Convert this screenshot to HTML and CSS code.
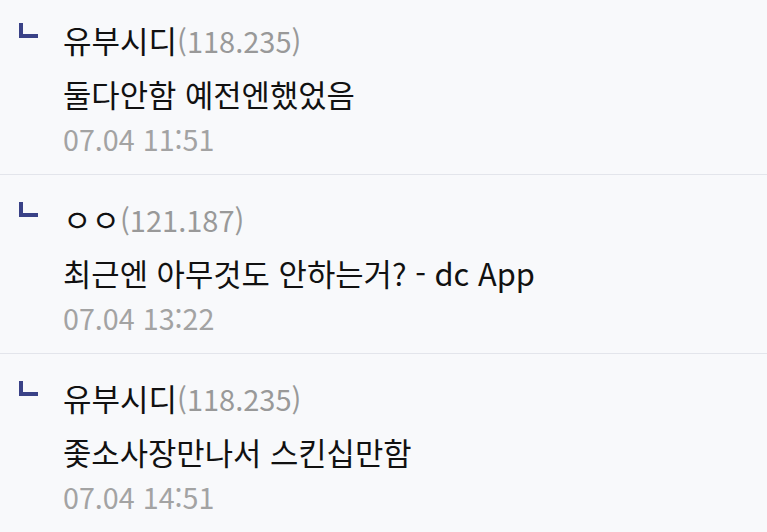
FILE: index.html
```html
<!DOCTYPE html>
<html lang="ko">

<head>
    <meta charset="UTF-8">
    <meta name="viewport" content="width=device-width, initial-scale=1.0">
    <title>답글</title>
    <link rel="stylesheet" href="styles.css">
</head>

<body>
    <ul class="reply-list">
        <li class="reply">
            <span class="reply-mark"></span>
            <div class="reply-body">
                <p class="nick">유부시디<span class="ip">(118.235)</span></p>
                <p class="txt">둘다안함 예전엔했었음</p>
                <p class="date">07.04 11:51</p>
            </div>
        </li>
        <li class="reply">
            <span class="reply-mark"></span>
            <div class="reply-body">
                <p class="nick">ㅇㅇ<span class="ip">(121.187)</span></p>
                <p class="txt">최근엔 아무것도 안하는거? - dc App</p>
                <p class="date">07.04 13:22</p>
            </div>
        </li>
        <li class="reply">
            <span class="reply-mark"></span>
            <div class="reply-body">
                <p class="nick">유부시디<span class="ip">(118.235)</span></p>
                <p class="txt">좇소사장만나서 스킨십만함</p>
                <p class="date">07.04 14:51</p>
            </div>
        </li>
    </ul>
</body>

</html>
```

FILE: styles.css
```css
* {
    padding: 0;
    margin: 0;
    list-style: none;
    border: 0;
}

body {
    background: #f8f9fb;
    font-family: "Noto Sans CJK KR", "Noto Sans", sans-serif;
    color: #111;
    overflow: hidden;
}

/* 목록이 살짝 스크롤된 상태 */
.reply-list {
    margin-top: -4px;
}

.reply {
    display: flex;
    padding: 22px 0 13px 19px;
    border-bottom: 1px solid #e3e5eb;
}

.reply-mark {
    flex: none;
    width: 15px;
    height: 11px;
    margin-top: 5px;
    border-left: 4px solid #3a4287;
    border-bottom: 4px solid #3a4287;
}

.reply-body {
    margin-left: 25px;
}

.nick {
    font-size: 31px;
    line-height: 44px;
    white-space: nowrap;
}

.ip {
    font-size: 29px;
    color: #999;
}

.txt {
    margin-top: 10px;
    font-size: 30.8px;
    line-height: 44px;
}

.date {
    margin-top: 1px;
    font-size: 28.7px;
    line-height: 44px;
    color: #a3a3a3;
}
```
